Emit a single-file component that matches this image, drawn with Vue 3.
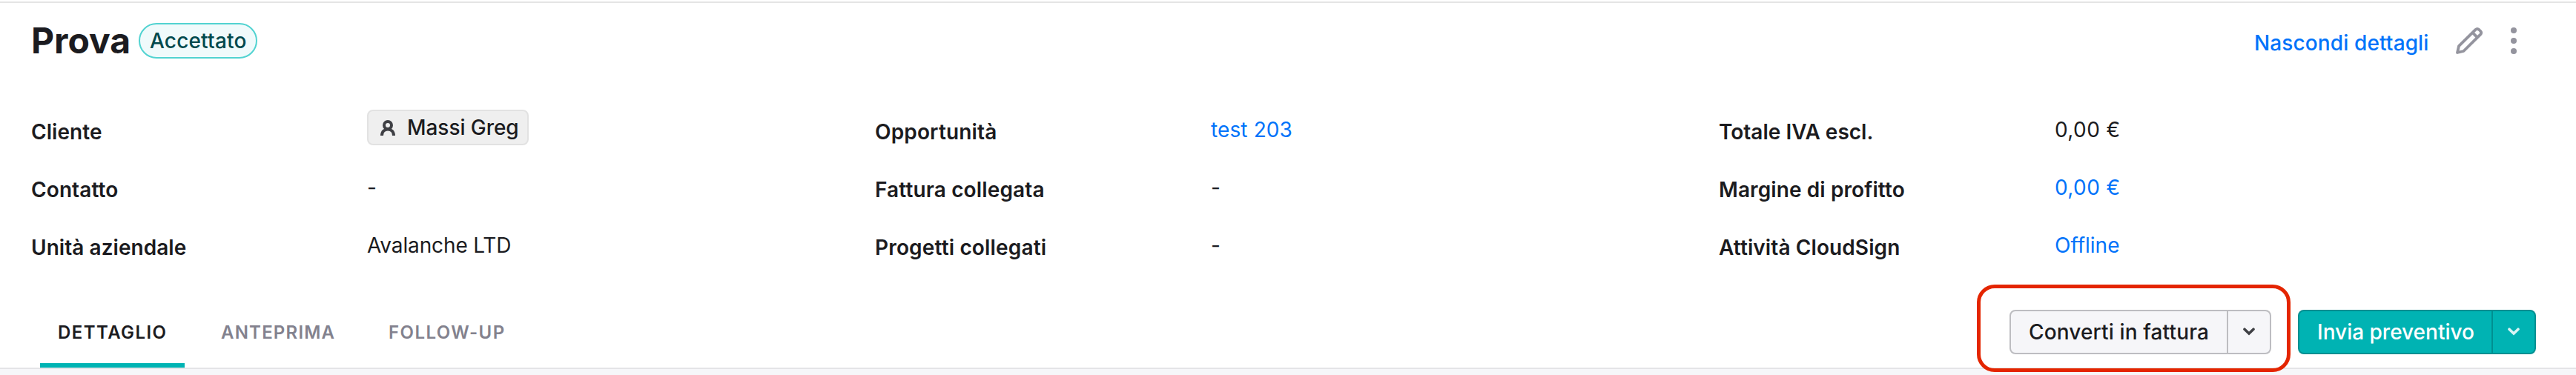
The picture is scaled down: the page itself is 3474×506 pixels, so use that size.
<script setup>
const columns = [
  [
    { label: 'Cliente', value: 'Massi Greg', kind: 'chip', track: 0.05 },
    { label: 'Contatto', value: '-', track: 0.1 },
    { label: 'Unità aziendale', value: 'Avalanche LTD', track: 0.05, valueTrack: -0.12 },
  ],
  [
    { label: 'Opportunità', value: 'test 203', kind: 'link', track: 0.15, valueTrack: 0.12 },
    { label: 'Fattura collegata', value: '-', track: 0.14 },
    { label: 'Progetti collegati', value: '-', track: 0.16 },
  ],
  [
    { label: 'Totale IVA escl.', value: '0,00 €', track: 0, valueTrack: 0.4 },
    { label: 'Margine di profitto', value: '0,00 €', kind: 'link', track: 0.1, valueTrack: 0.4 },
    { label: 'Attività CloudSign', value: 'Offline', kind: 'link', track: 0.1, valueTrack: 0 },
  ],
]
const spacing = (v) => ({ letterSpacing: (v || 0) + 'px' })
</script>

<template>
  <div class="page">
    <header class="top">
      <h1>Prova</h1>
      <span class="badge">Accettato</span>
      <a class="toggle">Nascondi dettagli</a>
      <svg class="pencil" width="40" height="40" viewBox="0 0 40 40" fill="none" stroke="#94949e" stroke-width="3.8" stroke-linejoin="round">
        <path d="M4 36L6 27.2L28.6 4.9Q30.8 2.9 33.2 5L35.2 7Q37.2 9.3 35 11.6L12.4 34Z" />
        <path d="M24.6 9.2L30.8 15.4" />
      </svg>
      <svg class="dots" width="8" height="36" viewBox="0 0 8 36" fill="#94949e">
        <circle cx="4" cy="4" r="4" />
        <circle cx="4" cy="18" r="4" />
        <circle cx="4" cy="32" r="4" />
      </svg>
    </header>

    <section class="details">
      <dl v-for="(col, i) in columns" :key="i">
        <div v-for="row in col" :key="row.label" class="row">
          <dt :style="spacing(row.track)">{{ row.label }}</dt>
          <dd>
            <span v-if="row.kind === 'chip'" class="chip">
              <svg width="20" height="21" viewBox="0 0 20 21" fill="none" stroke="#3f4045" stroke-width="4">
                <circle cx="10" cy="7" r="5" />
                <path d="M2 21C2 15.5 5.6 12.4 10 12.4S18 15.5 18 21" />
              </svg>
              {{ row.value }}
            </span>
            <span v-else :class="{ link: row.kind === 'link' }" :style="spacing(row.valueTrack)">{{ row.value }}</span>
          </dd>
        </div>
      </dl>
    </section>

    <nav class="bar">
      <a class="tab active">DETTAGLIO</a>
      <a class="tab second">ANTEPRIMA</a>
      <a class="tab">FOLLOW-UP</a>
      <div class="highlight">
        <div class="split">
          <button class="main">Converti in fattura</button>
          <button class="more">
            <svg width="16" height="11" viewBox="0 0 16 11" fill="none" stroke="#3f4045" stroke-width="3.6" stroke-linecap="round"><path d="M2 2.2L8 8L14 2.2" /></svg>
          </button>
        </div>
      </div>
      <div class="split primary">
        <button class="main">Invia preventivo</button>
        <button class="more">
          <svg width="16" height="11" viewBox="0 0 16 11" fill="none" stroke="#d9f4f4" stroke-width="3.6" stroke-linecap="round"><path d="M2 2.2L8 8L14 2.2" /></svg>
        </button>
      </div>
    </nav>
  </div>
</template>

<style>
body { background: #f6f6f9; }
</style>

<style scoped>
.page {
  box-sizing: border-box;
  width: 3474px;
  height: 506px;
  padding-top: 2px;
  overflow: hidden;
  background: linear-gradient(#fff 496px, #e4e4e7 496px, #e4e4e7 498px, #f6f6f9 498px);
  color: #1b1b20;
  font: 400 28px/40px Inter, "Liberation Sans", sans-serif;
}
.top {
  box-sizing: border-box;
  display: flex;
  align-items: flex-start;
  height: 144px;
  padding-left: 42px;
  border-top: 2px solid #e4e4e4;
}
h1 {
  width: 145px;
  margin: 20.5px 0 0;
  font-size: 48px;
  font-weight: 700;
  line-height: 60px;
}
.badge {
  box-sizing: border-box;
  width: 160px;
  height: 48px;
  margin-top: 27px;
  padding-left: 13px;
  border: 2px solid #52d3d1;
  border-radius: 24px;
  background: #f0fafb;
  color: #00494d;
  font-weight: 500;
  line-height: 44px;
  letter-spacing: .18px;
}
.toggle {
  margin: 34px 0 0 auto;
  width: 270px;
  color: #0073fa;
  font-weight: 500;
  letter-spacing: .12px;
}
.pencil { margin-top: 31px; }
.dots { margin: 33px 80px 0 36px; }
.details { display: flex; height: 234px; padding-left: 42px; }
dl { width: 1138px; margin: 0; }
.row { display: flex; height: 78px; }
dt { width: 452px; margin-top: 12px; font-weight: 600; }
dd { margin: 9px 0 0; padding-left: 1px; }
.link { color: #0073fa; }
.chip {
  box-sizing: border-box;
  display: flex;
  align-items: center;
  gap: 16px;
  width: 218px;
  height: 48px;
  margin-top: -7px;
  padding-left: 16px;
  border: 2px solid #e2e2e2;
  border-radius: 8px;
  background: #efefef;
  font-weight: 500;
  letter-spacing: -.05px;
}
.bar { display: flex; height: 126px; padding-left: 54px; }
.tab {
  box-sizing: border-box;
  height: 116px;
  padding: 49px 24px 0;
  color: #83828e;
  font-size: 24px;
  font-weight: 600;
  letter-spacing: 1.42px;
}
.tab.active { width: 195px; color: #1b1b20; border-bottom: 6px solid #00b3b3; }
.tab.second { margin: 0 25px; width: 201px; letter-spacing: 1.2px; }
.highlight {
  box-sizing: border-box;
  width: 423px;
  height: 118px;
  margin: 4px 10px 0 auto;
  padding: 29px 0 0 39px;
  border: 5px solid #e42500;
  border-radius: 24px;
}
.split {
  box-sizing: border-box;
  display: flex;
  width: 353px;
  height: 60px;
  border: 2px solid #bdbdc1;
  border-radius: 8px;
  background: #f6f6f9;
  color: #1b1b20;
}
button {
  height: 56px;
  padding: 0;
  border: 0;
  background: none;
  color: inherit;
  font: inherit;
  font-weight: 500;
  line-height: 56px;
}
.main { width: 291px; padding-left: 24px; text-align: left; letter-spacing: .14px; }
.more {
  display: flex;
  flex: 1;
  align-items: center;
  justify-content: center;
  border-left: 2px solid #bdbdc1;
}
.more svg { margin-bottom: 2px; }
.primary {
  width: 321px;
  margin: 38px 54px 0 0;
  border-color: #008f91;
  background: #00b3b3;
  color: #fff;
}
.primary .main { width: 259px; padding-left: 24px; letter-spacing: 0; }
.primary .more { border-color: #008f91; }
</style>
